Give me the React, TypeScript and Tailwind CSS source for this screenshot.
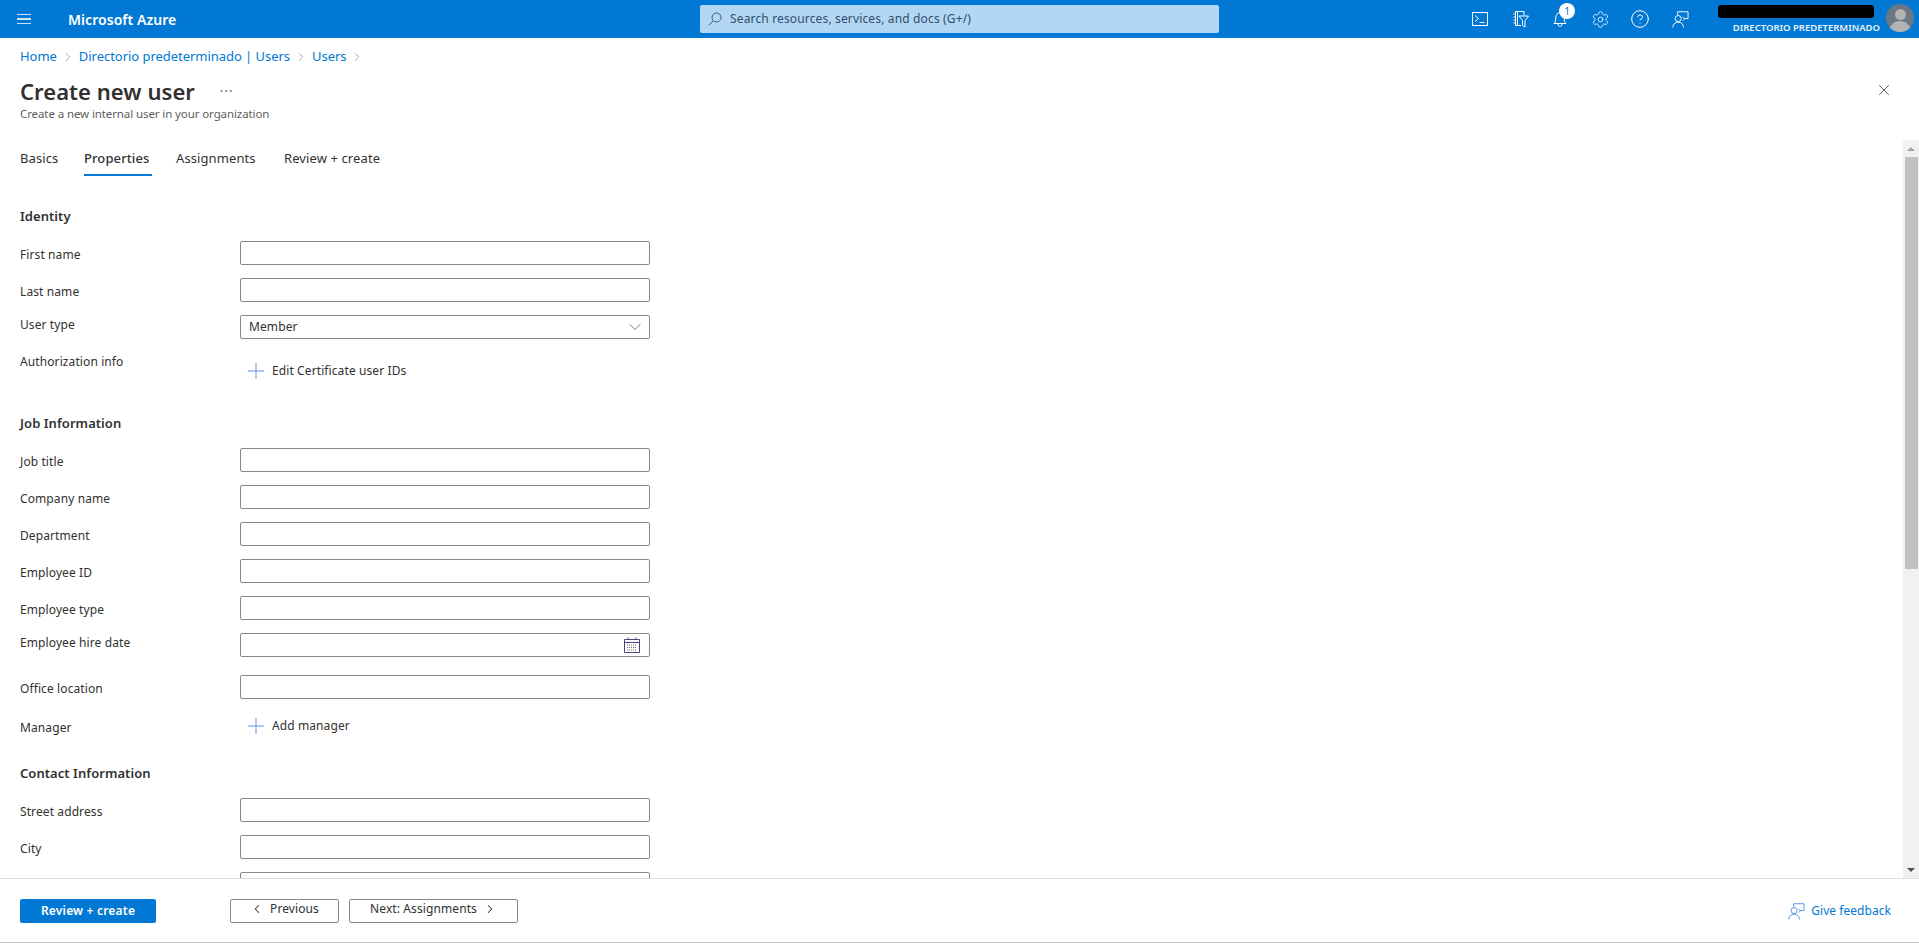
import { ChevronDown, ChevronLeft, ChevronRight, CircleHelp, Ellipsis, Settings, X } from "lucide-react";

const font = "font-['Noto_Sans','Open_Sans',sans-serif]";

const FeedbackIcon = ({ className }: { className?: string }) => (
  <svg viewBox="0 0 18 18" fill="none" stroke="currentColor" strokeWidth="1" className={className}>
    <path d="M6 4V0.8H17V8H13.5L11.5 10" />
    <circle cx="6.5" cy="8" r="3.2" />
    <path d="M0.8 17.5C1 14 3.2 11.8 6.5 11.8C9.8 11.8 12 14 12.2 17.5" />
    <path d="M11 6.5L13.5 8" />
  </svg>
);

const SearchIcon = () => (
  <svg viewBox="0 0 14 14" fill="none" stroke="#2f5f8f" strokeWidth="1" className="w-[14px] h-[14px] mr-2 shrink-0">
    <circle cx="8.5" cy="5.5" r="4.5" />
    <path d="M5.2 8.8L0.8 13.2" />
  </svg>
);

const TerminalIcon = () => (
  <svg viewBox="0 0 16 14" fill="none" stroke="currentColor" strokeWidth="1" className="w-4 h-[14px]">
    <rect x="0.5" y="0.5" width="15" height="13" />
    <path d="M3 3.5L6.5 6.5L3 9.5M7.5 10.5H12.5" />
  </svg>
);

const DirectoryIcon = () => (
  <svg viewBox="0 0 17 17" fill="none" stroke="currentColor" strokeWidth="1" className="w-[17px] h-[17px]">
    <path d="M9 14.5H3.5V0.5H12V4.5" />
    <path d="M5.5 0.5V14.5M1.5 3H3.5M1.5 6H3.5M1.5 9H3.5M1.5 12H3.5" />
    <path d="M7 5H16.5L13 9.5V16L10.5 14.5V9.5Z" />
  </svg>
);

const BellIcon = () => (
  <svg viewBox="0 0 14 16" fill="none" stroke="currentColor" strokeWidth="1" className="w-[14px] h-4">
    <path d="M1 12.5H13C11.5 11 11.2 9.5 11.2 7C11.2 4 9.5 1.5 7 1.5C4.5 1.5 2.8 4 2.8 7C2.8 9.5 2.5 11 1 12.5Z" />
    <path d="M5 13C5 14.8 6 15.5 7 15.5C8 15.5 9 14.8 9 13" />
  </svg>
);

const CalendarIcon = () => (
  <svg viewBox="0 0 16 16" fill="none" stroke="#50407e" strokeWidth="1" className="w-4 h-4">
    <path d="M0.5 2.5H15.5V15.5H0.5Z" />
    <path d="M0.5 5.5H15.5M4 0.5V2.5M12 0.5V2.5" />
    <path d="M3 8H13M3 10.5H13M3 13H13" strokeDasharray="1 1" stroke="#6b6b6b" />
  </svg>
);

const PlusIcon = () => (
  <svg viewBox="0 0 16 16" fill="none" stroke="#5f97e3" strokeWidth="1" className="w-4 h-4 mr-2 shrink-0">
    <path d="M8 0V16M0 8H16" />
  </svg>
);

const Section = ({ title, className }: { title: string; className?: string }) => (
  <div className={`h-5 mb-4 leading-[22px] text-[13px] font-semibold text-[#323130] tracking-[0.05px] ${className ?? ""}`}>
    {title}
  </div>
);

const Field = ({ label, gap = "mb-[13px]", lift, children }: { label: string; gap?: string; lift?: boolean; children?: React.ReactNode }) => (
  <div className={`flex items-center h-6 ${gap}`}>
    <div className={`w-[220px] text-[12px] tracking-[0.1px] text-[#323130] ${lift ? "pb-[4px]" : "pt-[3px]"}`}>{label}</div>
    <div className="w-[410px] h-6 border border-[#8a8886] rounded-[2px] bg-white flex items-center justify-between px-2">
      {children}
    </div>
  </div>
);

const AddRow = ({ label, text, topLabel }: { label: string; text: string; topLabel?: boolean }) => (
  <div className={`flex h-9 ${topLabel ? "items-start" : "items-center"}`}>
    <div className={`w-[220px] text-[12px] leading-5 tracking-[0.1px] text-[#323130] ${topLabel ? "" : "pt-[3px]"}`}>{label}</div>
    <div className={`h-9 flex items-center pl-2 text-[12px] tracking-[0.1px] text-[#323130] ${topLabel ? "pt-[2px]" : ""}`}>
      <PlusIcon />
      {text}
    </div>
  </div>
);

export default function App() {
  return (
    <div className={`h-[944px] w-full flex flex-col bg-white overflow-hidden ${font}`}>
      <header className="h-[38px] shrink-0 bg-[#0078d4] text-white flex items-center relative">
        <div className="w-[68px] pl-[17px] flex flex-col gap-[3px]">
          <div className="w-[14px] h-[1.5px] bg-[#cfe4f6]" />
          <div className="w-[14px] h-[1.5px] bg-[#cfe4f6]" />
          <div className="w-[14px] h-[1.5px] bg-[#cfe4f6]" />
        </div>
        <div className="w-[632px] text-[14px] font-semibold tracking-[0.05px]">Microsoft Azure</div>
        <div className="w-[519px] h-[28px] bg-[#b3d6f2] rounded-[2px] flex items-center pl-2 text-[12px] tracking-[0.15px] text-[#2f4f6f]">
          <SearchIcon />
          Search resources, services, and docs (G+/)
        </div>
        <div className="ml-[241px] flex items-center">
          <div className="w-10 flex justify-center"><TerminalIcon /></div>
          <div className="w-10 flex justify-center"><DirectoryIcon /></div>
          <div className="w-10 flex justify-center relative">
            <BellIcon />
            <div className="absolute -top-[8px] left-[19px] w-4 h-4 rounded-full bg-white text-[#0078d4] text-[10px] leading-4 text-center">1</div>
          </div>
          <div className="w-10 flex justify-center"><Settings className="w-[19px] h-[19px]" strokeWidth={1} /></div>
          <div className="w-10 flex justify-center"><CircleHelp className="w-[20px] h-[20px]" strokeWidth={1.2} /></div>
          <div className="w-10 flex justify-center"><FeedbackIcon className="w-[17px] h-[17px]" /></div>
        </div>
        <div className="absolute right-[39px] top-0 h-[38px] w-[162px] flex flex-col items-end">
          <div className="self-start mt-[5px] w-[156px] h-[13px] bg-black rounded-[3px]" />
          <div className="mt-[3px] text-[9.5px] leading-[14px] font-semibold tracking-[0px] whitespace-nowrap text-[#e8f3fb]">DIRECTORIO PREDETERMINADO</div>
        </div>
        <div className="absolute right-[5px] top-1 w-7 h-7 rounded-full bg-[#6b7785] overflow-hidden">
          <div className="mx-auto mt-[5px] w-[11px] h-[11px] rounded-full bg-[#b3b3b3]" />
          <div className="mx-auto mt-[1px] w-[22px] h-[14px] rounded-t-full bg-[#b3b3b3]" />
        </div>
      </header>

      <div className="h-[102px] shrink-0 px-5 relative">
        <div className="flex items-center h-9 pt-[2px] text-[13px] tracking-[-0.04px] text-[#0078d4]">
          <span>Home</span>
          <ChevronRight className="w-[14px] h-[14px] mx-[4px] text-[#8a8886]" strokeWidth={1.25} />
          <span>Directorio predeterminado | Users</span>
          <ChevronRight className="w-[14px] h-[14px] mx-[4px] text-[#8a8886]" strokeWidth={1.25} />
          <span>Users</span>
          <ChevronRight className="w-[14px] h-[14px] mx-[4px] text-[#8a8886]" strokeWidth={1.25} />
        </div>
        <div className="flex items-center h-8 mt-[1px]">
          <div className="w-[196px] text-[22px] font-semibold tracking-[0.05px] text-[#323130]">Create new user</div>
          <Ellipsis className="w-4 h-4 text-[#605e5c] ml-[2px]" strokeWidth={1} />
        </div>
        <div className="-mt-px text-[11.5px] leading-4 tracking-[-0.1px] text-[#605e5c]">Create a new internal user in your organization</div>
        <X className="absolute right-[26px] top-[43px] w-[18px] h-[18px] text-[#323130]" strokeWidth={1} />
      </div>

      <div className="flex-1 min-h-0 flex">
        <div className="flex-1 min-w-0 overflow-hidden pl-5">
          <div className="flex h-9 text-[13px] tracking-[0.1px] text-[#323130]">
            <div className="w-16 pt-[9px]">Basics</div>
            <div className="w-[68px] mr-6 pt-[9px] border-b-2 border-[#0078d4] font-medium whitespace-nowrap">Properties</div>
            <div className="w-[108px] pt-[9px]">Assignments</div>
            <div className="pt-[9px]">Review + create</div>
          </div>

          <Section title="Identity" className="mt-[29px]" />
          <Field label="First name" />
          <Field label="Last name" />
          <Field label="User type" lift>
            <span className="text-[12px] tracking-[0.1px] text-[#323130]">Member</span>
            <ChevronDown className="w-5 h-5 -mr-[4px] text-[#605e5c]" strokeWidth={1} />
          </Field>
          <AddRow label="Authorization info" text="Edit Certificate user IDs" topLabel />

          <Section title="Job Information" className="mt-6" />
          <Field label="Job title" />
          <Field label="Company name" />
          <Field label="Department" />
          <Field label="Employee ID" />
          <Field label="Employee type" />
          <Field label="Employee hire date" lift gap="mb-[18px]">
            <span />
            <div className="mr-px"><CalendarIcon /></div>
          </Field>
          <Field label="Office location" gap="mb-[9px]" />
          <AddRow label="Manager" text="Add manager" />

          <Section title="Contact Information" className="mt-[18px]" />
          <Field label="Street address" />
          <Field label="City" />
          <Field label="" />
        </div>

        <div className="w-4 shrink-0 bg-[#f1f1f1] flex flex-col items-center">
          <div className="h-[17px] flex items-center justify-center">
            <div className="border-x-[4px] border-x-transparent border-b-[4px] border-b-[#a3a3a3]" />
          </div>
          <div className="w-[13px] h-[412px] bg-[#c1c1c1]" />
          <div className="flex-1" />
          <div className="h-[17px] flex items-center justify-center">
            <div className="border-x-[4px] border-x-transparent border-t-[4px] border-t-[#505050]" />
          </div>
        </div>
      </div>

      <footer className="h-[64px] shrink-0 border-t border-[#e1dfdd] flex items-start pt-5 pl-5 pr-[28px]">
        <div className="w-[136px] h-6 rounded-[2px] bg-[#0078d4] text-white text-[12px] font-semibold tracking-[0.2px] flex items-center justify-center">
          Review + create
        </div>
        <div className="ml-[74px] w-[109px] h-6 border border-[#8a8886] rounded-[2px] text-[12px] leading-4 tracking-[0.1px] text-[#323130] flex items-start justify-center pt-[1px] gap-[6px]">
          <ChevronLeft className="w-[14px] h-[14px] mt-[1px]" strokeWidth={1.75} />
          Previous
        </div>
        <div className="ml-[10px] w-[169px] h-6 border border-[#8a8886] rounded-[2px] text-[12px] leading-4 tracking-[0.1px] text-[#323130] flex items-start justify-center pt-[1px] gap-[6px]">
          Next: Assignments
          <ChevronRight className="w-[14px] h-[14px] mt-[1px]" strokeWidth={1.75} />
        </div>
        <div className="ml-auto h-6 flex items-center gap-[6px] text-[12px] tracking-[0.05px] text-[#0078d4]">
          <FeedbackIcon className="w-[17px] h-[17px] text-[#4f8fe0]" />
          Give feedback
        </div>
      </footer>
      <div className="h-px mb-px shrink-0 bg-[#c8c6c4]" />
    </div>
  );
}
